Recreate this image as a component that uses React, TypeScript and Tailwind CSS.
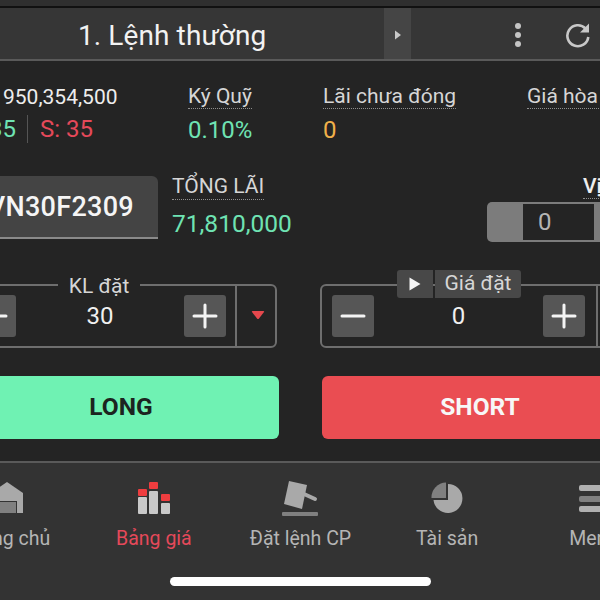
import React from 'react';

function Dotted({ children, className }: { children: React.ReactNode; className?: string }) {
  return <span className={`block whitespace-nowrap border-b border-dotted border-[#8f8f8f] text-[21px] leading-[24px] ${className ?? 'text-[#d6d6d6]'}`}>{children}</span>;
}

function StepButton({ minus }: { minus?: boolean }) {
  return (
    <div className="w-[42px] h-[42px] rounded-[3px] bg-[#565656] flex items-center justify-center shrink-0">
      <svg width="26" height="26" viewBox="0 0 26 26">
        <rect x="0.5" y="11.5" width="25" height="3" rx="1.5" fill="#f4f4f4" />
        {!minus && <rect x="11.5" y="0.5" width="3" height="25" rx="1.5" fill="#f4f4f4" />}
      </svg>
    </div>
  );
}

function NavItem({ label, active, children }: { label: string; active?: boolean; children: React.ReactNode }) {
  return (
    <div className="flex flex-col items-center">
      <div className="h-[36px] flex items-center justify-center">{children}</div>
      <span className={`mt-[11px] text-[19.5px] leading-[24px] whitespace-nowrap ${active ? 'text-[#e5495a]' : 'text-[#b5b5b5]'}`}>{label}</span>
    </div>
  );
}

function InfoCol({ label, value, valueClass, width }: { label: string; value?: string; valueClass?: string; width: string }) {
  return (
    <div className={`flex flex-col items-start shrink-0 ${width}`}>
      <Dotted>{label}</Dotted>
      {value && <span className={`mt-[8px] text-[24px] leading-[26px] ${valueClass}`}>{value}</span>}
    </div>
  );
}

export default function App() {
  return (
    <div className="w-[600px] h-[600px] overflow-hidden flex flex-col bg-[#242424] text-white font-['Roboto',sans-serif]">
      <div className="h-[8px] shrink-0 bg-[#2f2f2f] border-b-2 border-[#111]" />

      {/* title bar */}
      <div className="h-[53px] shrink-0 bg-[#363636] border-b-2 border-[#5a5a5a] flex items-stretch pl-[78px]">
        <div className="w-[306px] pt-[10px] text-[28px] leading-[36px] text-[#f2f2f2] tracking-[0.1px] whitespace-nowrap">1. Lệnh thường</div>
        <div className="w-[27px] pt-[2px] bg-[#454545] flex items-center justify-center">
          <svg width="8" height="10" viewBox="0 0 8 10"><path d="M1 0.5 L7 5 L1 9.5 Z" fill="#c8c8c8" /></svg>
        </div>
        <div className="flex items-center pt-[3px] ml-[101px] gap-[41px]">
          <svg width="12" height="27" viewBox="0 0 12 27">
            <circle cx="6" cy="4" r="3" fill="#c4c4c4" /><circle cx="6" cy="13" r="3" fill="#c4c4c4" /><circle cx="6" cy="22" r="3" fill="#c4c4c4" />
          </svg>
          <svg width="26" height="26" viewBox="0 0 26 26" fill="none">
            <path d="M20.5 6.5 A10.5 10.5 0 1 0 23.3 15" stroke="#c8c8c8" strokeWidth="2.6" />
            <path d="M24 1.5 V10.5 H15 Z" fill="#c8c8c8" />
          </svg>
        </div>
      </div>

      {/* account info */}
      <div className="flex h-[60px] w-[700px] -ml-[40px] mt-[23px] shrink-0">
        <div className="w-[228px] shrink-0 flex flex-col">
          <span className="pl-[43px] text-[21px] leading-[24px] text-[#ededed] pt-px">950,354,500</span>
          <div className="flex items-center mt-[7px] h-[26px] text-[24px] leading-[26px]">
            <span className="w-[56px] text-right text-[#6fe3b3] whitespace-nowrap">L: 35</span>
            <div className="ml-[11px] w-px h-[28px] bg-[#555]" />
            <span className="ml-[12px] text-[#e5495a] whitespace-nowrap">S: 35</span>
          </div>
        </div>
        <InfoCol width="w-[135px]" label="Ký Quỹ" value="0.10%" valueClass="text-[#6fe3b3]" />
        <InfoCol width="w-[204px]" label="Lãi chưa đóng" value="0" valueClass="text-[#f0b04a]" />
        <InfoCol width="w-[120px]" label="Giá hòa vốn" />
      </div>

      {/* symbol row */}
      <div className="flex items-start w-[700px] -ml-[40px] mt-[30px] shrink-0">
        <div className="mt-[2px] w-[198px] h-[63px] shrink-0 bg-[#444] rounded-tr-[6px] border-b-2 border-[#8a8a8a] flex items-center justify-end pr-[24px] pt-[2px]">
          <span className="text-[27px] font-medium text-[#f5f5f5] tracking-[0.3px] whitespace-nowrap">VN30F2309</span>
        </div>
        <div className="ml-[14px] w-[315px] shrink-0 flex flex-col items-start">
          <Dotted className="pb-px text-[#d6d6d6]">TỔNG LÃI</Dotted>
          <span className="mt-[9px] text-[24.5px] leading-[30px] text-[#6fe3b3]">71,810,000</span>
        </div>
        <div className="w-[140px] shrink-0 flex flex-col">
          <div className="pl-[96px]"><Dotted className="font-medium text-[#eeeeee]">Vị thế</Dotted></div>
          <div className="mt-[3px] h-[40px] rounded-[5px] bg-[#7c7c7c] pl-[36px] py-[2px]">
            <div className="w-[71px] h-full bg-[#242424] flex items-center pl-[15px] text-[24px] text-[#b5b5b5]">0</div>
          </div>
        </div>
      </div>

      {/* order inputs */}
      <div className="flex w-[700px] -ml-[40px] mt-[42px] gap-[43px] shrink-0">
        <div className="relative w-[317px] h-[64px] shrink-0 flex rounded-[6px] border-2 border-[#6e6e6e]">
          <div className="flex-1 flex items-center justify-between pl-[12px] pr-[9px] border-r-2 border-[#6e6e6e]">
            <StepButton minus />
            <span className="text-[24px] leading-[30px] text-[#f0f0f0]">30</span>
            <StepButton />
          </div>
          <div className="w-[38px] flex items-center justify-center pl-[4px] pb-[2px]">
            <svg width="14" height="10" viewBox="0 0 14 10"><path d="M1.5 1 H12.5 Q13.5 1 13 2 L8 8.5 Q7 9.5 6 8.5 L1 2 Q0.5 1 1.5 1 Z" fill="#e5484d" /></svg>
          </div>
          <div className="absolute left-[137px] -translate-x-1/2 -top-[12px] w-[82px] bg-[#242424] text-center text-[21px] leading-[24px] text-[#d6d6d6]">KL đặt</div>
        </div>

        <div className="relative w-[320px] h-[64px] shrink-0 flex rounded-[6px] border-2 border-[#6e6e6e]">
          <div className="w-[276px] flex items-center justify-between pl-[10px] pr-[11px] border-r-2 border-[#6e6e6e]">
            <StepButton minus />
            <span className="text-[24px] leading-[30px] text-[#f0f0f0]">0</span>
            <StepButton />
          </div>
          <div className="absolute left-[75px] -top-[16px] flex gap-[2px] h-[28px]">
            <div className="w-[36px] rounded-l-[3px] bg-[#484848] flex items-center justify-center">
              <svg width="12" height="14" viewBox="0 0 12 14"><path d="M0.5 0.5 L11.5 7 L0.5 13.5 Z" fill="#f4f4f4" /></svg>
            </div>
            <div className="w-[86px] rounded-r-[3px] bg-[#484848] flex items-center justify-center text-[21px] text-[#d6d6d6]">Giá đặt</div>
          </div>
        </div>
      </div>

      {/* long / short */}
      <div className="flex w-[700px] -ml-[40px] pl-[3px] mt-[28px] gap-[43px] shrink-0">
        <button type="button" className="w-[316px] h-[63px] shrink-0 rounded-[6px] bg-[#6ff2b3] text-[24.5px] font-bold text-[#1c2420]">LONG</button>
        <button type="button" className="w-[316px] h-[63px] shrink-0 rounded-[6px] bg-[#ea4d52] text-[24.5px] font-bold text-[#f7f7f7]">SHORT</button>
      </div>

      {/* bottom nav */}
      <div className="mt-[22px] flex-1 bg-[#333] border-t-2 border-[#5a5a5a] pt-[17px] flex flex-col">
        <div className="grid grid-cols-5 w-[733px] -ml-[66px]">
          <NavItem label="Trang chủ">
            <svg width="32" height="32" viewBox="0 0 32 32">
              <path d="M0 11 L16 0 L32 11 V31 H0 Z" fill="#a9a9a9" />
              <rect x="6.5" y="19.5" width="19" height="12" fill="#808080" stroke="#333" />
            </svg>
          </NavItem>
          <NavItem label="Bảng giá" active>
            <svg width="32" height="32" viewBox="0 0 32 32">
              <rect x="0" y="7" width="9" height="7" rx="1" fill="#ee3d3f" /><rect x="0" y="15" width="9" height="17" rx="1" fill="#c9c9c9" />
              <rect x="11" y="0" width="9" height="7" rx="1" fill="#ee3d3f" /><rect x="11" y="9" width="9" height="23" rx="1" fill="#c9c9c9" />
              <rect x="23" y="12" width="9" height="7" rx="1" fill="#ee3d3f" /><rect x="23" y="21" width="9" height="11" rx="1" fill="#c9c9c9" />
            </svg>
          </NavItem>
          <NavItem label="Đặt lệnh CP">
            <svg width="36" height="36" viewBox="0 0 36 36">
              <path d="M7 1 L25 5 L20 29 L2 24 Z" fill="#a9a9a9" />
              <path d="M22 14 L33 19" stroke="#a9a9a9" strokeWidth="4" strokeLinecap="round" />
              <rect x="0" y="32" width="36" height="4" rx="1" fill="#808080" />
            </svg>
          </NavItem>
          <NavItem label="Tài sản">
            <svg width="32" height="32" viewBox="0 0 32 32">
              <path d="M17 2 A14.5 14.5 0 1 1 2.5 18 H17 Z" fill="#a9a9a9" />
              <path d="M15 0.5 V16 H0.5 A15 15 0 0 1 15 0.5 Z" fill="#808080" />
            </svg>
          </NavItem>
          <NavItem label="Menu">
            <svg width="30" height="27" viewBox="0 0 30 27">
              <rect x="0" y="0" width="30" height="6" rx="2" fill="#b0b0b0" />
              <rect x="0" y="11" width="30" height="6" rx="2" fill="#808080" />
              <rect x="0" y="21" width="30" height="6" rx="2" fill="#b0b0b0" />
            </svg>
          </NavItem>
        </div>
        <div className="mt-[26px] flex justify-center">
          <div className="w-[261px] h-[9px] rounded-full bg-white" />
        </div>
      </div>
    </div>
  );
}
